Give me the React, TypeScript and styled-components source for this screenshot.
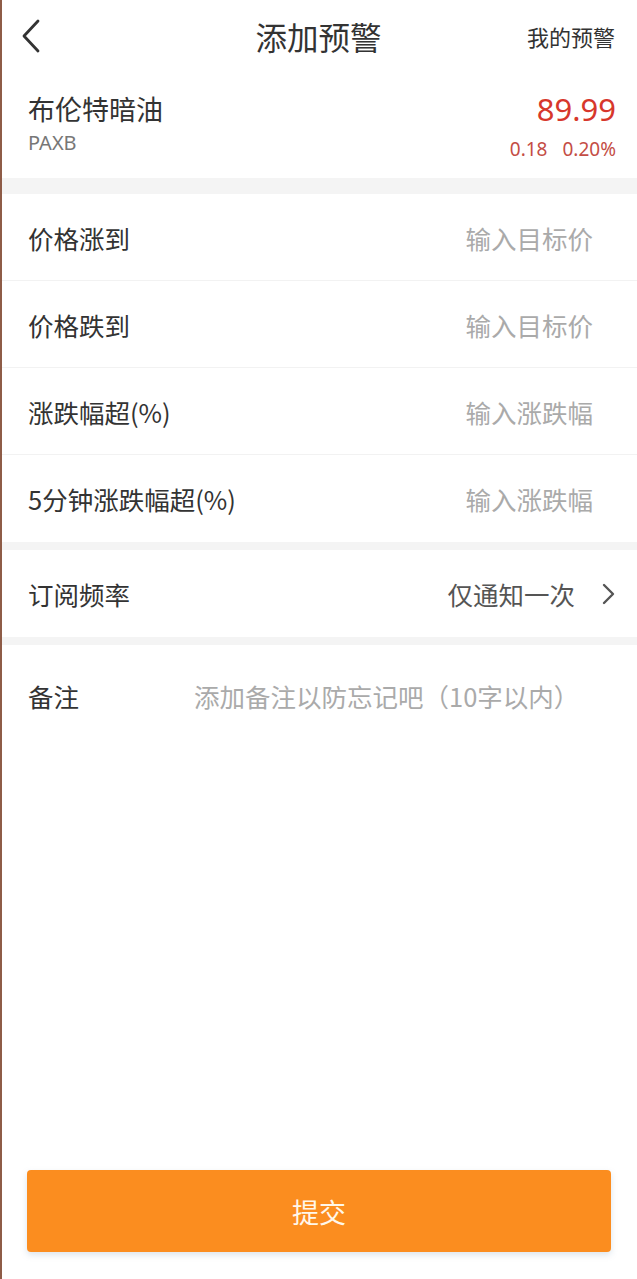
import React from "react";
import styled, { createGlobalStyle } from "styled-components";

const Global = createGlobalStyle`
  html, body { margin: 0; padding: 0; background: #fff; }
  body { font-family: "Noto Sans CJK SC", "Noto Sans", sans-serif; color: #333; }
  * { box-sizing: border-box; }
`;

const Page = styled.div`
  min-height: 100vh;
  display: flex;
  flex-direction: column;
  border-left: 2px solid #8e5c47;
  background: #fff;
`;

const NavBar = styled.header`
  height: 72px;
  display: grid;
  grid-template-columns: 120px 1fr 120px;
  align-items: center;
  padding: 0 22px 0 18px;
`;

const BackButton = styled.button`
  border: 0;
  background: none;
  padding: 0;
  width: 30px;
  height: 36px;
  display: flex;
  align-items: center;
  color: #333;
  cursor: pointer;
`;

const Title = styled.h1`
  margin: 0;
  text-align: center;
  font-size: 31.5px;
  font-weight: 400;
  color: #333;
  transform: translateX(1px);
`;

const NavAction = styled.div`
  text-align: right;
  font-size: 22px;
  color: #333;
`;

const Product = styled.section`
  height: 106px;
  display: flex;
  justify-content: space-between;
  padding: 17px 21px 0 26px;
`;

const NameCol = styled.div`
  display: flex;
  flex-direction: column;
`;

const Name = styled.div`
  font-size: 27px;
  line-height: 40px;
  color: #333;
`;

const Code = styled.div`
  font-family: "Noto Sans", sans-serif;
  font-size: 20px;
  line-height: 28px;
  color: #777;
`;

const PriceCol = styled.div`
  display: flex;
  flex-direction: column;
  align-items: flex-end;
`;

const Price = styled.div`
  font-family: "Noto Sans", sans-serif;
  font-size: 31px;
  line-height: 40px;
  color: #d7372c;
`;

const Change = styled.div`
  font-family: "Noto Sans", sans-serif;
  font-size: 19px;
  line-height: 24px;
  margin-top: 8px;
  color: #c44d45;
  display: flex;
  gap: 15px;
`;

const Band = styled.div<{ $h: number }>`
  height: ${(p) => p.$h}px;
  background: #f4f4f4;
`;

const Row = styled.div<{ $h?: number; $line?: boolean }>`
  height: ${(p) => p.$h ?? 87}px;
  display: flex;
  align-items: center;
  padding: 0 22px 0 26px;
  border-bottom: ${(p) => (p.$line ? "1px solid #f2f2f2" : "0")};
`;

const Label = styled.div<{ $w?: number }>`
  font-size: 25.5px;
  color: #333;
  width: ${(p) => (p.$w ? `${p.$w}px` : "auto")};
  flex-shrink: 0;
`;

const Placeholder = styled.div<{ $align?: string }>`
  flex: 1;
  text-align: ${(p) => p.$align ?? "right"};
  font-size: 25.5px;
  color: #aaa;
  padding-right: ${(p) => (p.$align === "left" ? "0" : "22px")};
`;

const Value = styled.div`
  flex: 1;
  text-align: right;
  font-size: 25.5px;
  color: #555;
  display: flex;
  justify-content: flex-end;
  align-items: center;
  gap: 26px;
`;

const Spacer = styled.div`
  flex: 1;
`;

const Submit = styled.button`
  margin: 0 26px 27px 25px;
  height: 82px;
  border: 0;
  border-radius: 4px;
  background: #fb8d1f;
  color: #fff7ea;
  font-family: "Noto Sans CJK SC", sans-serif;
  font-size: 27px;
  box-shadow: 0 3px 6px rgba(120, 150, 180, 0.25);
  cursor: pointer;
`;

const Chevron = ({ dir }: { dir: "left" | "right" }) =>
  dir === "left" ? (
    <svg width="22" height="34" viewBox="0 0 22 34" fill="none">
      <path d="M18 2 L4 17 L18 32" stroke="#333" strokeWidth="2.8" strokeLinecap="round" strokeLinejoin="round" />
    </svg>
  ) : (
    <svg width="14" height="22" viewBox="0 0 14 22" fill="none">
      <path d="M3 2 L12 11 L3 20" stroke="#555" strokeWidth="2.4" strokeLinecap="round" strokeLinejoin="round" />
    </svg>
  );

const rows = [
  { label: "价格涨到", ph: "输入目标价" },
  { label: "价格跌到", ph: "输入目标价" },
  { label: "涨跌幅超(%)", ph: "输入涨跌幅" },
  { label: "5分钟涨跌幅超(%)", ph: "输入涨跌幅" },
];

export default function App() {
  return (
    <Page>
      <Global />
      <NavBar>
        <BackButton aria-label="返回">
          <Chevron dir="left" />
        </BackButton>
        <Title>添加预警</Title>
        <NavAction>我的预警</NavAction>
      </NavBar>
      <Product>
        <NameCol>
          <Name>布伦特暗油</Name>
          <Code>PAXB</Code>
        </NameCol>
        <PriceCol>
          <Price>89.99</Price>
          <Change>
            <span>0.18</span>
            <span>0.20%</span>
          </Change>
        </PriceCol>
      </Product>
      <Band $h={16} />
      {rows.map((r, i) => (
        <Row key={r.label} $line={i < rows.length - 1}>
          <Label>{r.label}</Label>
          <Placeholder>{r.ph}</Placeholder>
        </Row>
      ))}
      <Band $h={8} />
      <Row $h={87}>
        <Label>订阅频率</Label>
        <Value>
          <span>仅通知一次</span>
          <Chevron dir="right" />
        </Value>
      </Row>
      <Band $h={8} />
      <Row $h={100}>
        <Label $w={166}>备注</Label>
        <Placeholder $align="left">添加备注以防忘记吧（10字以内）</Placeholder>
      </Row>
      <Spacer />
      <Submit>提交</Submit>
    </Page>
  );
}
